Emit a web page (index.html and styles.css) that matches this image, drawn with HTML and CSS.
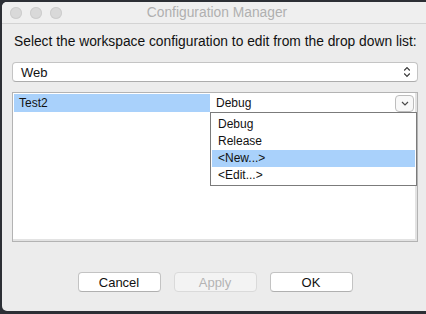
FILE: index.html
```html
<!DOCTYPE html>
<html lang="en">
<head>
    <meta charset="UTF-8">
    <meta name="viewport" content="width=device-width, initial-scale=1.0">
    <title>Configuration Manager</title>
    <link rel="stylesheet" href="styles.css">
</head>
<body>
    <div class="window">
        <div class="titlebar">
            <div class="lights"><span></span><span></span><span></span></div>
            <div class="title">Configuration Manager</div>
        </div>

        <div class="content">
            <p class="prompt">Select the workspace configuration to edit from the drop down list:</p>

            <div class="select">
                <span>Web</span>
                <svg class="updown" width="8" height="12" viewBox="0 0 8 12">
                    <polyline points="1.2,4.5 4,1.7 6.8,4.5" />
                    <polyline points="1.2,7.5 4,10.3 6.8,7.5" />
                </svg>
            </div>

            <div class="grid">
                <div class="row">
                    <div class="cell name">Test2</div>
                    <div class="cell combo">
                        <span>Debug</span>
                        <span class="combo-btn">
                            <svg width="8" height="5" viewBox="0 0 8 5">
                                <polyline points="1,1 4,4 7,1" />
                            </svg>
                        </span>
                    </div>
                </div>

                <ul class="popup">
                    <li>Debug</li>
                    <li>Release</li>
                    <li class="active">&lt;New...&gt;</li>
                    <li>&lt;Edit...&gt;</li>
                </ul>
            </div>

            <div class="buttons">
                <button>Cancel</button>
                <button disabled>Apply</button>
                <button>OK</button>
            </div>
        </div>
    </div>
</body>
</html>
```

FILE: styles.css
```css
body {
    margin: 0;
    height: 314px;
    overflow: hidden;
    background-color: #2c2f35;
    font-family: 'Liberation Sans', Arial, sans-serif;
    color: #111;
}
.window {
    margin: 2px 0 0 2px;
    width: 426px;
    height: 309px;
    background-color: #ececec;
    border-radius: 5px 0 0 5px;
    display: flex;
    flex-direction: column;
    overflow: hidden;
}

/* title bar */
.titlebar {
    height: 21px;
    flex-shrink: 0;
    background-color: #efefef;
    border-bottom: 1px solid #d3d3d3;
    display: grid;
    grid-template-columns: 1fr auto 1fr;
    align-items: center;
    padding: 0 4px 0 8px;
}
.lights {
    display: flex;
    gap: 8px;
}
.lights span {
    width: 12px;
    height: 12px;
    border-radius: 50%;
    background-color: #d9d9d9;
    box-shadow: inset 0 0 0 1px #cdcdcd;
}
.title {
    font-size: 13.8px;
    color: #b0b0b0;
}

.content {
    display: flex;
    flex-direction: column;
    padding: 10px 10px 0;
}
.prompt {
    margin: 0;
    padding-left: 2px;
    font-size: 13.8px;
    line-height: 16px;
}

/* popup button */
.select {
    margin-top: 12px;
    height: 20px;
    box-sizing: border-box;
    background-color: #fff;
    border: 1px solid #c4c4c4;
    border-bottom-color: #acacac;
    border-radius: 4px;
    padding: 0 6px 0 8px;
    display: flex;
    align-items: center;
    justify-content: space-between;
    font-size: 13px;
}
.updown polyline {
    fill: none;
    stroke: #3a3a3a;
    stroke-width: 1.2;
}

/* property grid */
.grid {
    position: relative;
    margin-top: 10px;
    height: 150px;
    box-sizing: border-box;
    background-color: #fff;
    border: 1px solid #b3b3b3;
    padding: 1px;
    box-shadow: inset -2px -2px 0 #e3e3e3;
}
.row {
    display: flex;
    height: 18px;
}
.cell {
    font-size: 12px;
    line-height: 18px;
}
.cell.name {
    width: 196px;
    padding-left: 5px;
    box-sizing: border-box;
    background-color: #a9d1fb;
}
.cell.combo {
    flex-grow: 1;
    display: flex;
    align-items: center;
    justify-content: space-between;
    padding: 0 2px 0 6px;
}
.combo-btn {
    width: 19px;
    height: 17px;
    box-sizing: border-box;
    border: 1px solid #bdbdbd;
    border-radius: 4px;
    background-color: #f8f8f8;
    display: flex;
    align-items: center;
    justify-content: center;
}
.combo-btn polyline {
    fill: none;
    stroke: #4a4a4a;
    stroke-width: 1.2;
}
.popup { /* open drop down of the combo cell */
    position: absolute;
    left: 197px;
    top: 19px;
    width: 207px;
    box-sizing: border-box;
    margin: 0;
    padding: 3px 1px 1px;
    list-style: none;
    background-color: #fff;
    border: 1px solid #7b7b7b;
}
.popup li {
    height: 17px;
    line-height: 17px;
    padding-left: 6px;
    font-size: 12px;
}
.popup li.active {
    background-color: #a9d1fb;
}

/* dialog buttons */
.buttons {
    margin-top: 30px;
    display: flex;
    justify-content: center;
    gap: 13px;
}
button {
    width: 83px;
    height: 20px;
    padding: 0;
    font-family: inherit;
    font-size: 13px;
    color: #111;
    background-color: #fff;
    border: 1px solid #c3c3c3;
    border-bottom-color: #b0b0b0;
    border-radius: 4px;
}
button:disabled {
    background-color: #f3f3f3;
    border-color: #dadada;
    color: #b4b4b4;
}
```
